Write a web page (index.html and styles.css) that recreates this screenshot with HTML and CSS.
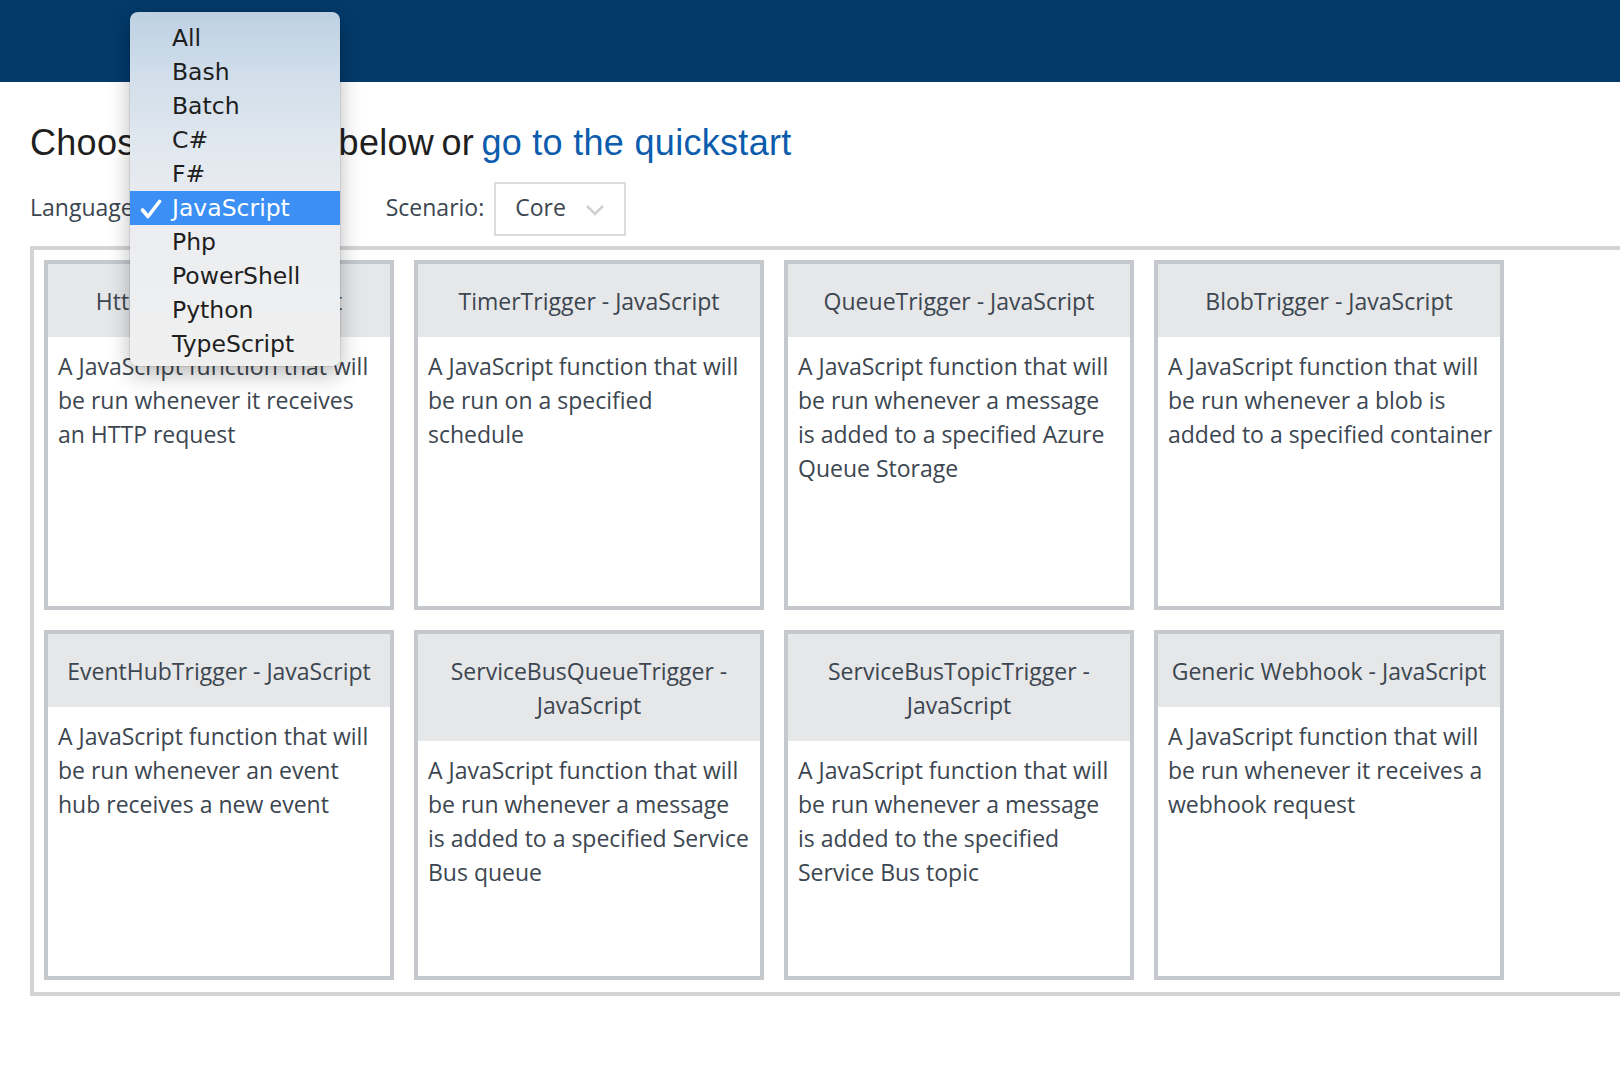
FILE: index.html
```html
<!DOCTYPE html>
<html lang="en">
<head>
<meta charset="utf-8">
<title>Choose a template</title>
<link rel="stylesheet" href="styles.css">
</head>
<body>
<header class="topbar"></header>
<main class="page">
  <h1 class="title"><span class="title-lead">Choose a template below or </span><a class="title-link" href="#">go to the quickstart</a></h1>
  <div class="filters">
    <div class="filter filter-language">
      <span class="filter-label">Language:</span>
      <div class="select select-language">
        <span class="select-value">JavaScript</span>
        <svg class="chevron" width="20" height="14" viewBox="0 0 20 14"><path d="M2 3 L10 11 L18 3" fill="none" stroke="#cfd0d2" stroke-width="2.5"/></svg>
      </div>
    </div>
    <div class="filter">
      <span class="filter-label">Scenario:</span>
      <div class="select select-scenario">
        <span class="select-value">Core</span>
        <svg class="chevron" width="20" height="14" viewBox="0 0 20 14"><path d="M2 3 L10 11 L18 3" fill="none" stroke="#cfd0d2" stroke-width="2.5"/></svg>
      </div>
    </div>
  </div>
  <section class="templates">
    <div class="card">
      <div class="card-head">HttpTrigger - JavaScript</div>
      <div class="card-body">A JavaScript function that will<br>be run whenever it receives<br>an HTTP request</div>
    </div>
    <div class="card">
      <div class="card-head">TimerTrigger - JavaScript</div>
      <div class="card-body">A JavaScript function that will<br>be run on a specified<br>schedule</div>
    </div>
    <div class="card">
      <div class="card-head">QueueTrigger - JavaScript</div>
      <div class="card-body">A JavaScript function that will<br>be run whenever a message<br>is added to a specified Azure<br>Queue Storage</div>
    </div>
    <div class="card">
      <div class="card-head">BlobTrigger - JavaScript</div>
      <div class="card-body">A JavaScript function that will<br>be run whenever a blob is<br>added to a specified container</div>
    </div>
    <div class="card">
      <div class="card-head">EventHubTrigger - JavaScript</div>
      <div class="card-body">A JavaScript function that will<br>be run whenever an event<br>hub receives a new event</div>
    </div>
    <div class="card">
      <div class="card-head">ServiceBusQueueTrigger -<br>JavaScript</div>
      <div class="card-body">A JavaScript function that will<br>be run whenever a message<br>is added to a specified Service<br>Bus queue</div>
    </div>
    <div class="card">
      <div class="card-head">ServiceBusTopicTrigger -<br>JavaScript</div>
      <div class="card-body">A JavaScript function that will<br>be run whenever a message<br>is added to the specified<br>Service Bus topic</div>
    </div>
    <div class="card">
      <div class="card-head">Generic Webhook - JavaScript</div>
      <div class="card-body">A JavaScript function that will<br>be run whenever it receives a<br>webhook request</div>
    </div>
  </section>
</main>

<div class="menu" role="listbox">
  <div class="menu-item">All</div>
  <div class="menu-item">Bash</div>
  <div class="menu-item">Batch</div>
  <div class="menu-item">C#</div>
  <div class="menu-item">F#</div>
  <div class="menu-item is-selected">
    <svg class="check" width="22" height="20" viewBox="0 0 22 20"><path d="M2.5 11 L8 17.5 L19.5 2.5" fill="none" stroke="#ffffff" stroke-width="3.6" stroke-linecap="round" stroke-linejoin="round"/></svg>
    JavaScript
  </div>
  <div class="menu-item">Php</div>
  <div class="menu-item">PowerShell</div>
  <div class="menu-item">Python</div>
  <div class="menu-item">TypeScript</div>
</div>
</body>
</html>
```

FILE: styles.css
```css
html, body {
  margin: 0;
  padding: 0;
}

body {
  background: #ffffff;
  font-family: "Open Sans", "Noto Sans", sans-serif;
  color: #3c4650;
  overflow: hidden;
  width: 1620px;
  height: 1082px;
  position: relative;
}

.topbar {
  height: 82px;
  background: #033a6a;
}

.page {
  padding-left: 30px;
}

.title {
  margin: 40px 0 0;
  font-family: "Liberation Sans", Arial, sans-serif;
  font-weight: normal;
  font-size: 36px;
  line-height: 42px;
  letter-spacing: 0.3px;
  color: #1f1f1f;
}

.title-lead {
  word-spacing: -3px;
}

.title-link {
  color: #0b5cad;
  text-decoration: none;
}

.filters {
  display: flex;
  align-items: center;
  gap: 48px;
  margin-top: 18px;
  height: 54px;
}

.filter {
  display: flex;
  align-items: center;
  gap: 10px;
}

.filter-label {
  font-size: 23px;
  line-height: 34px;
  padding-bottom: 4px;
}

.select {
  box-sizing: border-box;
  height: 54px;
  border: 2px solid #dcdcdc;
  display: flex;
  align-items: center;
  justify-content: space-between;
  padding: 0 19px;
  font-size: 23px;
  color: #3c4650;
}

.select-value {
  line-height: 34px;
  padding-bottom: 4px;
}

.select-language {
  width: 188px;
}

.select-scenario {
  width: 132px;
}

.chevron {
  display: block;
  margin-top: 2px;
}

.templates {
  box-sizing: border-box;
  width: 1640px;
  margin-top: 10px;
  border: 4px solid #d4d4d6;
  padding: 10px 10px 12px;
  display: grid;
  grid-template-columns: repeat(4, 350px);
  grid-auto-rows: 350px;
  gap: 20px;
}

.card {
  box-sizing: border-box;
  border: 4px solid #c5c8cc;
  display: flex;
  flex-direction: column;
  background: #ffffff;
}

.card-head {
  background: #e6e7e9;
  padding: 20px 8px 19px;
  text-align: center;
  font-size: 23px;
  line-height: 34px;
  color: #3c4650;
}

.card-body {
  padding: 12px 10px;
  font-size: 23px;
  line-height: 34px;
  white-space: nowrap;
  color: #3c4650;
}

/* native popup menu for the language select */
.menu {
  position: absolute;
  left: 130px;
  top: 12px;
  width: 210px;
  height: 354px;
  box-sizing: border-box;
  padding-top: 9px;
  border-radius: 8px;
  background: linear-gradient(180deg, #bdd1e3 0px, #d3dfeb 70px, #e2e8ef 140px, #ebedf0 210px, #f0f0f0 354px);
  box-shadow: 0 8px 22px rgba(0, 0, 0, 0.28), 0 0 0 1px rgba(0, 0, 0, 0.08);
  font-family: "DejaVu Sans", Verdana, sans-serif;
  font-size: 23.5px;
  color: #1e1e1e;
}

.menu-item {
  position: relative;
  height: 34px;
  line-height: 34px;
  padding-left: 42px;
  white-space: nowrap;
}

.menu-item.is-selected {
  background: #3b8ff5;
  color: #ffffff;
}

.check {
  position: absolute;
  left: 10px;
  top: 8px;
}
```
